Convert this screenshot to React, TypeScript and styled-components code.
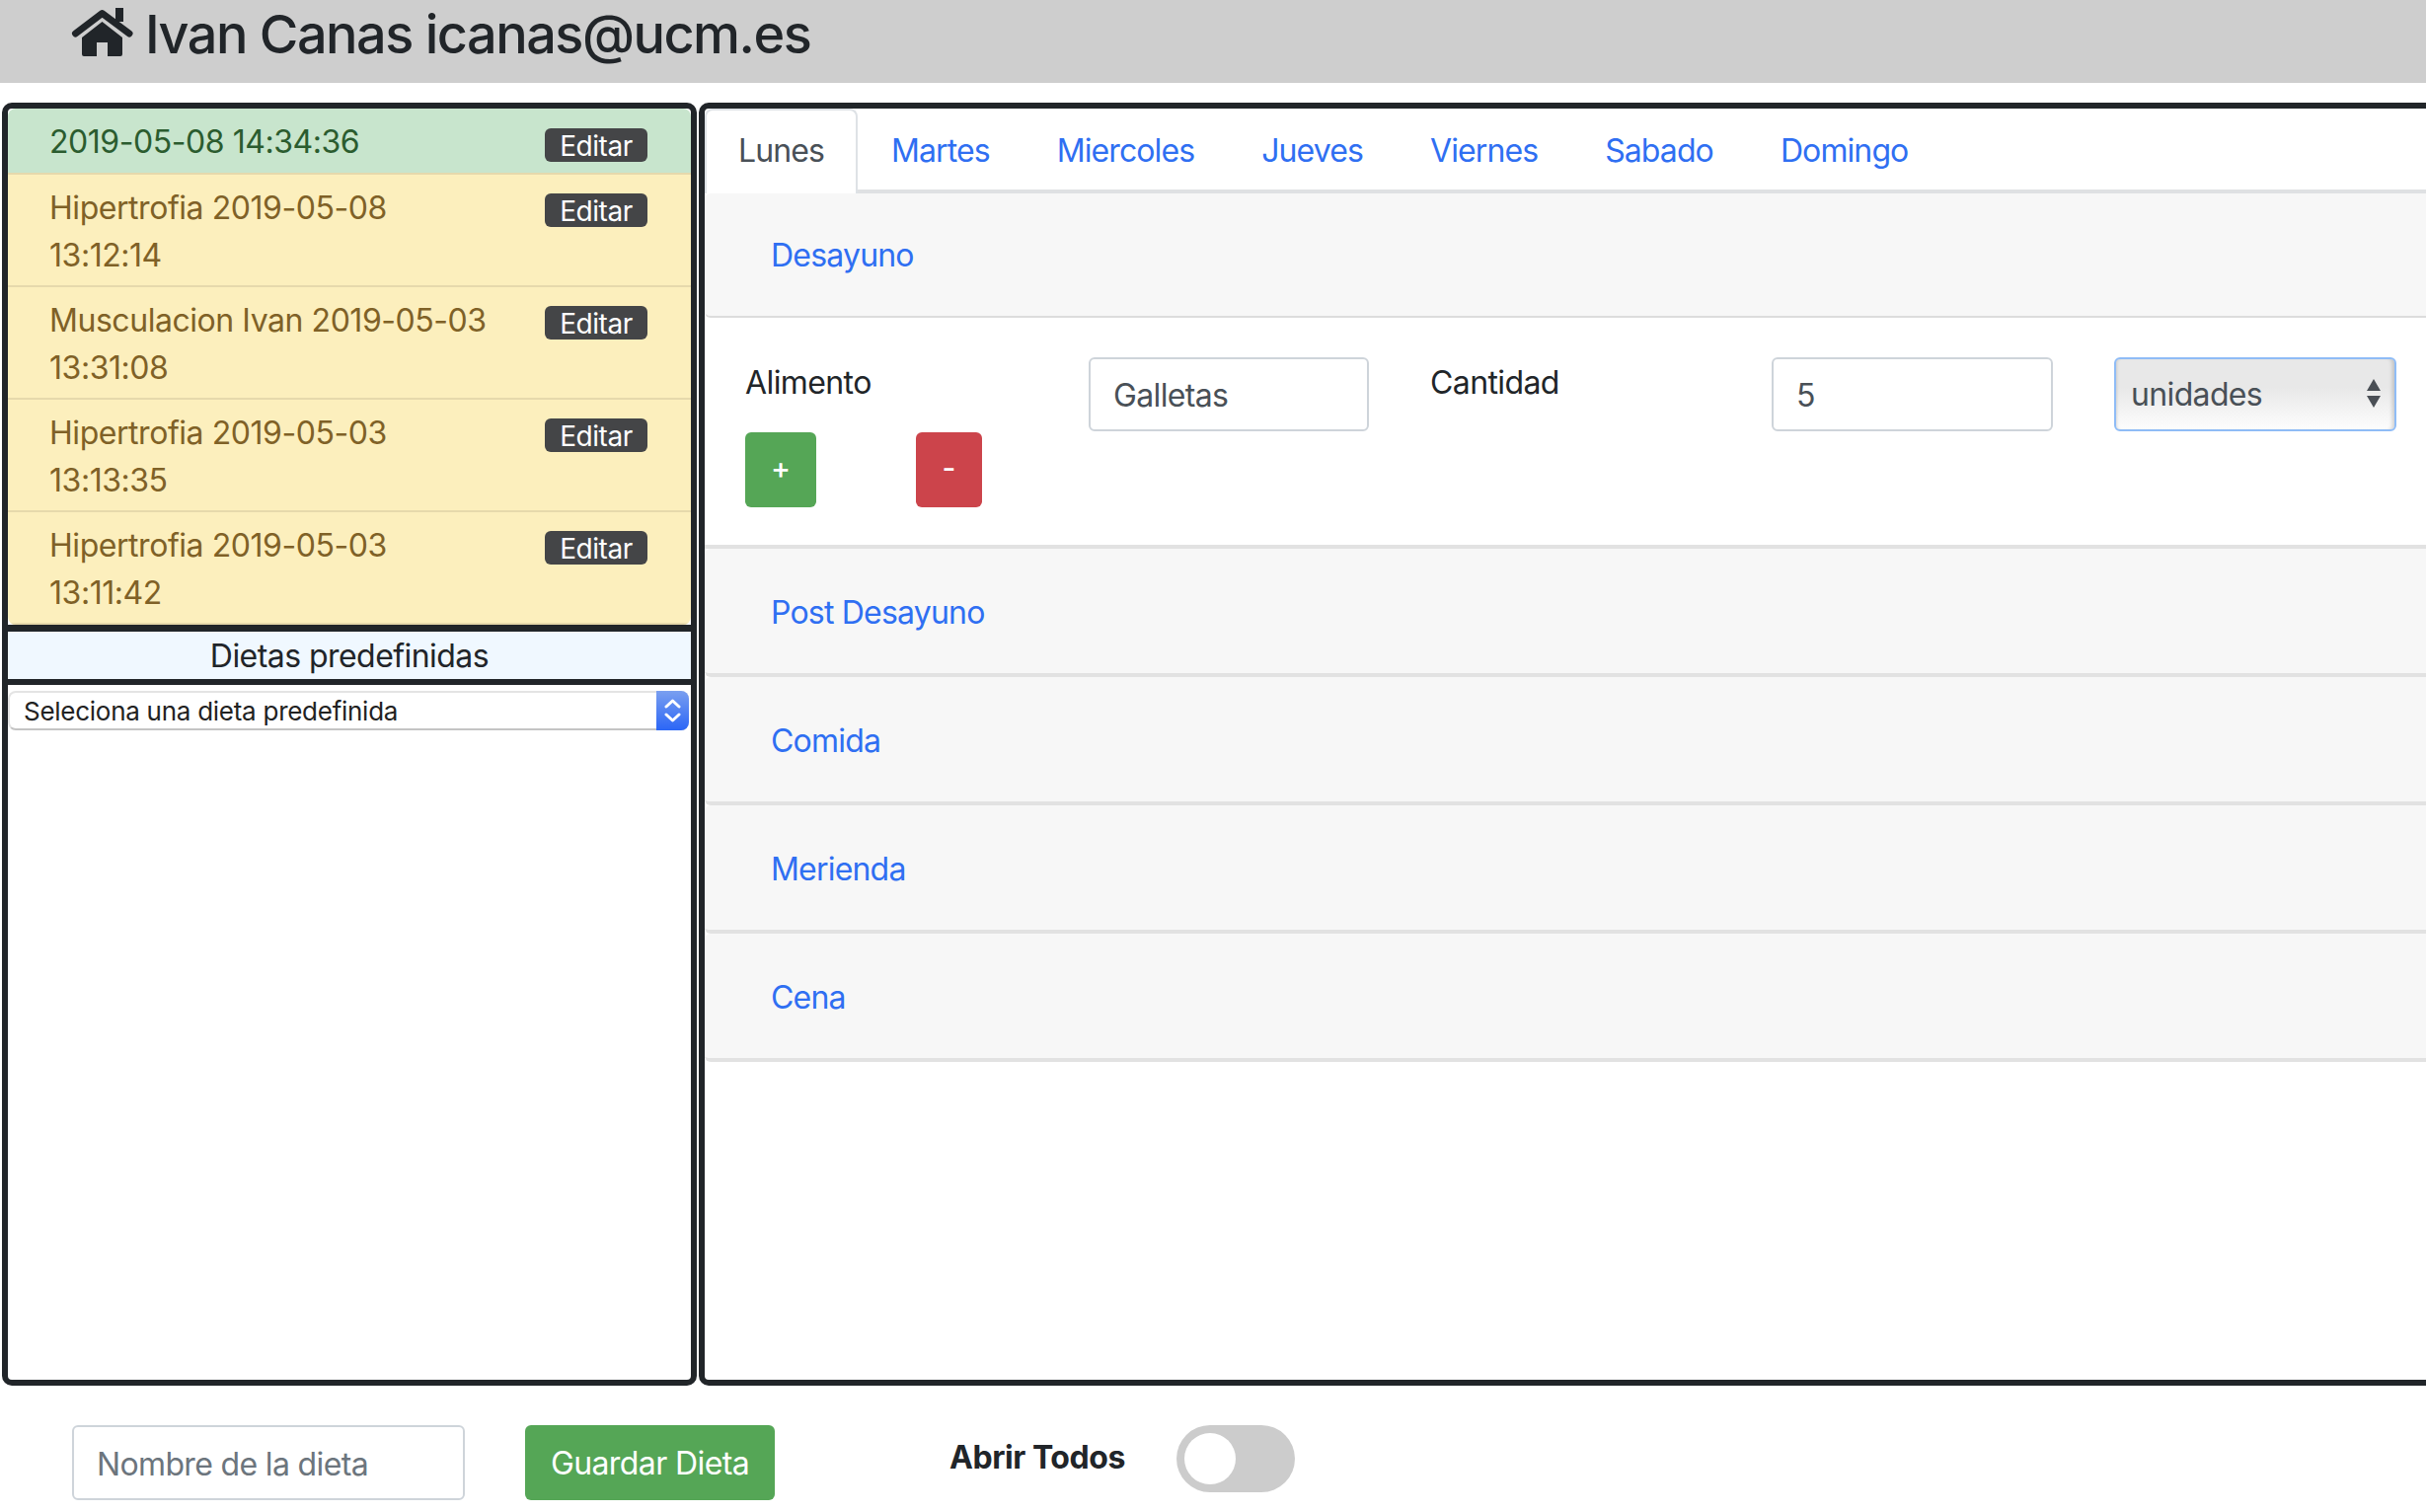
import React from 'react';
import styled, { createGlobalStyle } from 'styled-components';

const FONT = '"Inter", "Liberation Sans", Arial, sans-serif';

const Global = createGlobalStyle`
  html, body { margin: 0; padding: 0; height: 100%; overflow: hidden; background: #fff; }
  body { font-family: ${FONT}; font-size: 32px; line-height: 48px; color: #212529; letter-spacing: -0.6px; }
  * { box-sizing: border-box; }
`;

const Page = styled.div`
  width: 2458px;
  height: 1532px;
  overflow: hidden;
  display: flex;
  flex-direction: column;
`;

const Header = styled.header`
  height: 84px;
  flex: none;
  background: #cecece;
  display: flex;
  align-items: flex-start;
  gap: 12px;
  padding: 0 0 0 72px;
`;

const Home = styled.svg`
  width: 63px;
  height: 49px;
  margin-top: 8px;
  flex: none;
`;

const Title = styled.h1`
  margin: 0;
  font-size: 54px;
  line-height: 70px;
  font-weight: 500;
  color: #212529;
  letter-spacing: -1.5px;
`;

const Main = styled.main`
  display: flex;
  gap: 2px;
  margin-top: 20px;
  padding-left: 2px;
  height: 1300px;
  flex: none;
`;

const LeftPanel = styled.section`
  width: 704px;
  flex: none;
  border: 6px solid #212529;
  border-radius: 10px;
  display: flex;
  flex-direction: column;
  background: #fff;
`;

const RightPanel = styled.section`
  width: 1800px;
  flex: none;
  border: 6px solid #212529;
  border-radius: 10px;
  background: #fff;
`;

const List = styled.ul`
  list-style: none;
  margin: 0;
  padding: 0;
  border-radius: 8px 8px 8px 8px;
  overflow: hidden;
`;

const Item = styled.li<{ $tone: 'success' | 'warning' }>`
  display: flex;
  justify-content: space-between;
  align-items: flex-start;
  padding: 10px 44px 8px 42px;
  background: ${p => (p.$tone === 'success' ? '#c8e5cd' : '#fcefbd')};
  color: ${p => (p.$tone === 'success' ? '#2b5c2f' : '#7f6127')};
  border-bottom: 2px solid #e6d9ac;
  height: ${p => (p.$tone === 'success' ? '67px' : '114px')};
`;

const ItemText = styled.span`
  width: 450px;
  letter-spacing: -0.45px;
`;

const Badge = styled.span<{ $raised?: boolean }>`
  width: 104px;
  height: 34px;
  margin-top: ${p => (p.$raised ? '9px' : '10px')};
  background: #444547;
  color: #fff;
  border-radius: 6px;
  font-size: 28px;
  line-height: 36px;
  letter-spacing: -0.45px;
  text-align: center;
  flex: none;
`;

const PresetTitle = styled.div`
  flex: none;
  height: 61px;
  background: #f0f8ff;
  border-top: 7px solid #212529;
  border-bottom: 6px solid #212529;
  text-align: center;
  line-height: 50px;
  letter-spacing: -0.55px;
`;

const PresetArea = styled.div`
  padding: 6px 2px 0 0;
  flex: 1;
`;

const PresetSelectWrap = styled.div`
  position: relative;
  height: 40px;
`;

const PresetSelect = styled.select`
  appearance: none;
  display: block;
  width: 100%;
  height: 40px;
  border: 2px solid #e4e4e4;
  border-bottom-color: #c4c4c4;
  border-radius: 8px;
  background: #fff;
  padding: 0 0 0 14px;
  font-family: ${FONT};
  font-size: 26px;
  letter-spacing: -0.27px;
  color: #222;
`;

const SelectCap = styled.span`
  position: absolute;
  top: 0;
  right: 0;
  width: 33px;
  height: 40px;
  border-radius: 0 8px 8px 0;
  background: linear-gradient(#7a9ff0, #2b66f6);
  display: flex;
  align-items: center;
  justify-content: center;
`;

const Tabs = styled.nav`
  display: flex;
  height: 86px;
  border-bottom: 4px solid #dfe1e3;
`;

const Tab = styled.a<{ $active?: boolean }>`
  padding: 17px 32px 0;
  height: 86px;
  border: 2px solid ${p => (p.$active ? '#dee2e6' : 'transparent')};
  border-bottom: 0;
  border-radius: 8px 8px 0 0;
  background: ${p => (p.$active ? '#fff' : 'transparent')};
  color: ${p => (p.$active ? '#495057' : '#2f6ff2')};
  letter-spacing: -0.9px;
`;

const CardHeader = styled.div<{ $open?: boolean }>`
  height: ${p => (p.$open ? '126px' : '130px')};
  background: #f7f7f7;
  color: #2f6ff2;
  padding: ${p => (p.$open ? '39px' : '41px')} 0 0 67px;
  border-bottom: ${p => (p.$open ? '2px solid #dcdcdc' : '4px solid #e2e2e2')};
  border-radius: 6px 0 0 6px;
  letter-spacing: -0.8px;
`;

const CardBody = styled.div`
  height: 234px;
  border-bottom: 4px solid #e2e2e2;
  display: grid;
  grid-template-columns: 348px 284px 62px 284px 62px 285px 62px 286px;
  grid-template-rows: 76px 76px;
  padding: 40px 0 0 41px;
`;

const FieldLabel = styled.div`
  padding-top: 2px;
`;

const LabelCell = styled.div`
  grid-row: 1 / span 2;
  display: flex;
  flex-direction: column;
`;

const Buttons = styled.div`
  display: flex;
  gap: 101px;
  margin-top: 26px;
`;

const SmallButton = styled.button<{ $danger?: boolean }>`
  height: 76px;
  width: ${p => (p.$danger ? '67px' : '72px')};
  border: 0;
  border-radius: 6px;
  background: ${p => (p.$danger ? '#cc444b' : '#55a656')};
  color: #fff;
  font-family: ${FONT};
  font-size: 30px;
  font-weight: 500;
  padding: 0 0 5px;
`;

const TextInput = styled.input`
  width: 100%;
  height: 75px;
  border: 2px solid #ced4da;
  border-radius: 6px;
  padding: 2px 23px 0;
  font-family: ${FONT};
  font-size: 32px;
  letter-spacing: -0.65px;
  color: #495057;
  background: #fff;
  outline: none;
  &::placeholder { color: #6c757d; opacity: 1; }
`;

const UnitWrap = styled.div`
  position: relative;
  height: 75px;
  width: 286px;
`;

const UnitSelect = styled.select`
  appearance: none;
  display: block;
  width: 100%;
  height: 75px;
  border: 2px solid #8fbcf6;
  border-radius: 6px;
  padding: 0 0 0 15px;
  background: linear-gradient(#e8e8e8 0%, #e8e8e8 40%, #fdfdfd 100%);
  box-shadow: inset -5px 0 4px -3px rgba(0, 0, 0, 0.18), inset 3px 0 3px -2px rgba(0, 0, 0, 0.12);
  font-family: ${FONT};
  font-size: 32px;
  letter-spacing: -0.65px;
  color: #495057;
  outline: none;
`;

const UnitArrows = styled.svg`
  position: absolute;
  top: 22px;
  right: 16px;
  width: 14px;
  height: 29px;
`;

const Spacer = styled.div`
  height: 0;
`;

const Footer = styled.footer`
  margin-top: 40px;
  padding-left: 73px;
  display: flex;
  align-items: flex-start;
`;

const NameInput = styled(TextInput)`
  width: 398px;
  height: 76px;
`;

const SaveButton = styled.button`
  margin-left: 61px;
  width: 253px;
  height: 76px;
  border: 0;
  border-radius: 6px;
  background: #55a656;
  color: #fff;
  font-family: ${FONT};
  font-size: 32px;
  letter-spacing: -0.6px;
  padding: 0;
`;

const ToggleLabel = styled.b`
  width: 230px;
  margin-left: 177px;
  margin-top: 9px;
  font-size: 32px;
  font-weight: 700;
  letter-spacing: -0.45px;
  white-space: nowrap;
`;

const Toggle = styled.span`
  width: 120px;
  height: 68px;
  border-radius: 34px;
  background: #cccccc;
  padding: 8px;
  flex: none;
`;

const Knob = styled.span`
  display: block;
  width: 52px;
  height: 52px;
  border-radius: 50%;
  background: #fff;
`;

const items = [
  { tone: 'success' as const, text: '2019-05-08 14:34:36' },
  { tone: 'warning' as const, text: 'Hipertrofia 2019-05-08 13:12:14' },
  { tone: 'warning' as const, text: 'Musculacion Ivan 2019-05-03 13:31:08' },
  { tone: 'warning' as const, text: 'Hipertrofia 2019-05-03 13:13:35' },
  { tone: 'warning' as const, text: 'Hipertrofia 2019-05-03 13:11:42' },
];

const days = ['Lunes', 'Martes', 'Miercoles', 'Jueves', 'Viernes', 'Sabado', 'Domingo'];
const meals = ['Post Desayuno', 'Comida', 'Merienda', 'Cena'];

export default function App() {
  return (
    <Page>
      <Global />
      <Header>
        <Home viewBox="0 0 63 49" aria-hidden="true">
          <path d="M45 0 H53 V14 H45 Z" fill="#212529" />
          <path d="M4.5 26 L31.5 5.5 L59 26" fill="none" stroke="#212529" strokeWidth="7" strokeLinecap="round" strokeLinejoin="round" />
          <path d="M31.5 14 L52 30 V47 a2 2 0 0 1 -2 2 H37 V35 H26 V49 H13 a2 2 0 0 1 -2 -2 V30 Z" fill="#212529" />
        </Home>
        <Title>Ivan Canas icanas@ucm.es</Title>
      </Header>
      <Main>
        <LeftPanel>
          <List>
            {items.map(item => (
              <Item key={item.text} $tone={item.tone}>
                <ItemText>{item.text}</ItemText>
                <Badge $raised={item.tone === 'warning'}>Editar</Badge>
              </Item>
            ))}
          </List>
          <PresetTitle>Dietas predefinidas</PresetTitle>
          <PresetArea>
            <PresetSelectWrap>
              <PresetSelect defaultValue="x">
                <option value="x">Seleciona una dieta predefinida</option>
              </PresetSelect>
              <SelectCap>
                <svg width="17" height="26" viewBox="0 0 17 26" fill="none" stroke="#fff" strokeWidth="3" strokeLinecap="round" strokeLinejoin="round">
                  <path d="M2 9 L8.5 3 L15 9" />
                  <path d="M2 17 L8.5 23 L15 17" />
                </svg>
              </SelectCap>
            </PresetSelectWrap>
          </PresetArea>
        </LeftPanel>
        <RightPanel>
          <Tabs>
            {days.map((d, i) => (
              <Tab key={d} $active={i === 0}>{d}</Tab>
            ))}
          </Tabs>
          <CardHeader $open>Desayuno</CardHeader>
          <CardBody>
            <LabelCell>
              <FieldLabel>Alimento</FieldLabel>
              <Buttons>
                <SmallButton>+</SmallButton>
                <SmallButton $danger>-</SmallButton>
              </Buttons>
            </LabelCell>
            <TextInput readOnly value="Galletas" />
            <Spacer />
            <FieldLabel>Cantidad</FieldLabel>
            <Spacer />
            <TextInput readOnly value="5" />
            <Spacer />
            <UnitWrap>
              <UnitSelect defaultValue="u">
                <option value="u">unidades</option>
              </UnitSelect>
              <UnitArrows viewBox="0 0 14 29">
                <path d="M7 0 L14 12 L0 12 Z M0 17 L14 17 L7 29 Z" fill="#4a4f55" />
              </UnitArrows>
            </UnitWrap>
          </CardBody>
          {meals.map(m => (
            <CardHeader key={m}>{m}</CardHeader>
          ))}
        </RightPanel>
      </Main>
      <Footer>
        <NameInput placeholder="Nombre de la dieta" />
        <SaveButton>Guardar Dieta</SaveButton>
        <ToggleLabel>Abrir Todos</ToggleLabel>
        <Toggle><Knob /></Toggle>
      </Footer>
    </Page>
  );
}
